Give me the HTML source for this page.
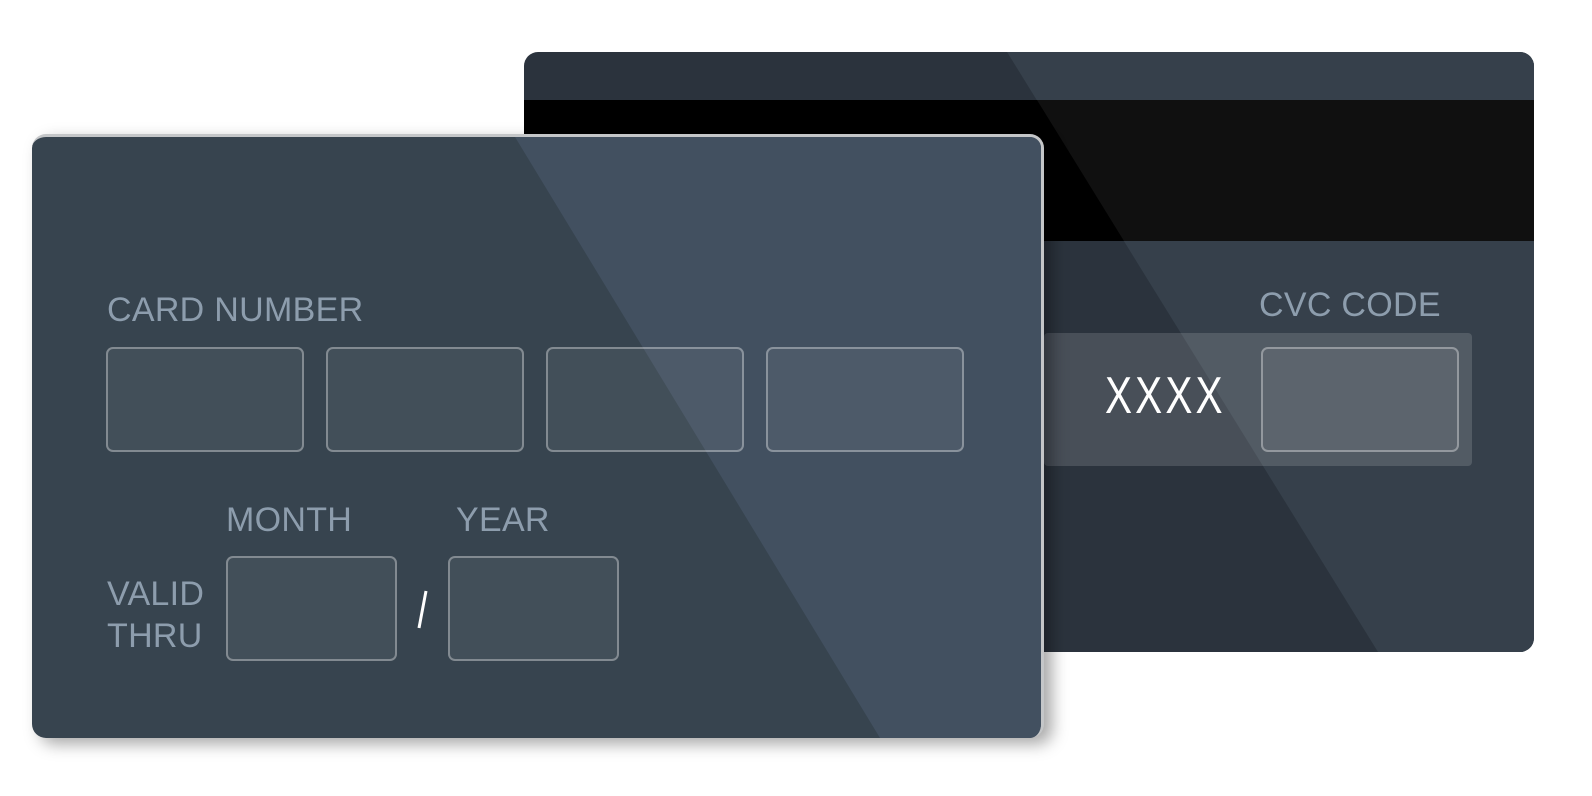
<!DOCTYPE html>
<html><head><style>
body{margin:0;width:1592px;height:796px;background:#fff;position:relative;overflow:hidden;font-family:"Liberation Sans",sans-serif}
.abs{position:absolute}
.back{left:524px;top:52px;width:1010px;height:600px;border-radius:14px;overflow:hidden;background:#2b333d}
.front{left:32px;top:134px;width:1009px;height:601px;border-radius:14px;overflow:hidden;background:#37444f;border-top:3px solid #c4c6c8;border-right:3px solid #c4c6c8;box-shadow:8px 6px 16px rgba(0,0,0,0.35)}
.lbl{color:#8d9dad;font-size:34px;letter-spacing:0.3px;line-height:1}
.box{border:2px solid rgba(255,255,255,0.34);border-radius:7px;background:rgba(255,255,255,0.06);box-sizing:border-box}
</style></head><body>
<div class="abs back">
  <svg class="abs" style="left:0;top:0" width="1010" height="600"><polygon points="483,0 1010,0 1010,600 854,600" fill="#36404b"/></svg>
  <div class="abs" style="left:0;top:48px;width:1010px;height:141px;background:#000"></div>
  <svg class="abs" style="left:0;top:48px" width="1010" height="141"><polygon points="513,0 1010,0 1010,141 600,141" fill="#101010"/></svg>
  <div class="abs" style="left:520px;top:281px;width:428px;height:133px;background:rgba(255,255,255,0.14);border-radius:4px"></div>
  <div class="abs lbl" style="left:735px;top:236px">CVC CODE</div>
  <div class="abs" style="left:581px;top:318px;color:#fff;font-size:52px;line-height:1;transform:scaleX(0.78);transform-origin:left;letter-spacing:4px">XXXX</div>
  <div class="abs box" style="left:737px;top:295px;width:198px;height:105px;background:rgba(255,255,255,0.06)"></div>
</div>
<div class="abs front">
  <svg class="abs" style="left:0;top:0" width="1009" height="601"><polygon points="483,0 1009,0 1009,601 848,601" fill="#425060"/></svg>
  <div class="abs lbl" style="left:75px;top:156px">CARD NUMBER</div>
  <div class="abs box" style="left:74px;top:210px;width:198px;height:105px"></div>
  <div class="abs box" style="left:294px;top:210px;width:198px;height:105px"></div>
  <div class="abs box" style="left:514px;top:210px;width:198px;height:105px"></div>
  <div class="abs box" style="left:734px;top:210px;width:198px;height:105px"></div>
  <div class="abs lbl" style="left:194px;top:366px">MONTH</div>
  <div class="abs lbl" style="left:424px;top:366px">YEAR</div>
  <div class="abs lbl" style="left:75px;top:436px;line-height:42px">VALID<br>THRU</div>
  <div class="abs box" style="left:194px;top:419px;width:171px;height:105px"></div>
  <div class="abs box" style="left:416px;top:419px;width:171px;height:105px"></div>
  <svg class="abs" style="left:380px;top:448px" width="20" height="50"><line x1="14" y1="6" x2="7" y2="43" stroke="#fff" stroke-width="3"/></svg>
</div>
</body></html>
